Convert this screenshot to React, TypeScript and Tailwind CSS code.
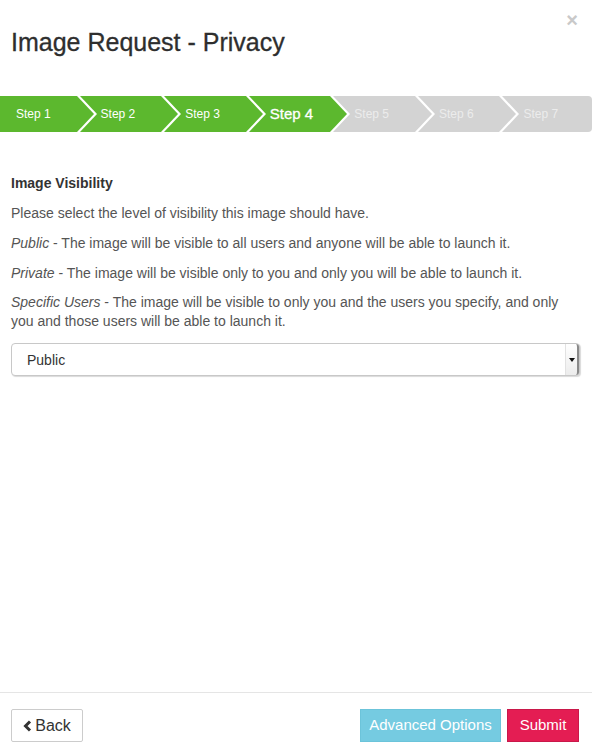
import React from "react";

const GREEN = "#5cb82e";
const GRAY = "#d3d3d3";

const steps = [1, 2, 3, 4, 5, 6, 7];
const active = 4;

function Chevron({ color, next }: { color: string; next: string }) {
  return (
    <svg
      className="absolute top-0 right-[-13px] z-10"
      width="21"
      height="36"
      viewBox="0 0 21 36"
    >
      <rect x="0" y="0" width="21" height="36" fill={next} />
      <polygon points="0,0 3,0 20,18 3,36 0,36" fill="#ffffff" />
      <polygon points="0,0 17,18 0,36" fill={color} />
    </svg>
  );
}

export default function App() {
  return (
    <div
      className="w-[592px] h-[749px] bg-white flex flex-col text-[#333]"
      style={{ fontFamily: '"Liberation Sans", Arial, sans-serif' }}
    >
      <div className="flex justify-between items-start pl-[11px] pr-[14px] pt-[28px]">
        <h4 className="text-[25px] leading-[28px] text-[#2e2e2e] [-webkit-text-stroke:0.3px_#2e2e2e]">
          Image Request - Privacy
        </h4>
        <span className="text-[#c9c9c9] text-[20px] font-bold leading-[20px] mt-[-18px]">×</span>
      </div>

      <div className="flex h-[36px] mt-[40px]">
        {steps.map((s) => {
          const done = s <= active;
          const color = done ? GREEN : GRAY;
          const nextColor = s + 1 <= active ? GREEN : GRAY;
          return (
            <div
              key={s}
              className={`relative flex-1 flex items-center pl-[16px] ${
                s === 7 ? "rounded-r-[4px]" : ""
              } ${done ? "bg-[#5cb82e]" : "bg-[#d3d3d3]"}`}
            >
              <span
                className={`relative z-20 ${
                  s === active
                    ? "text-[15px] text-white [-webkit-text-stroke:0.3px_#ffffff]"
                    : done
                    ? "text-[12px] text-white"
                    : "text-[12px] text-[#ececec]"
                }`}
              >
                Step {s}
              </span>
              {s < 7 && <Chevron color={color} next={nextColor} />}
            </div>
          );
        })}
      </div>

      <div className="flex-1 flex flex-col px-[11px] pt-[41px] text-[14px] leading-[20px]">
        <div className="font-bold text-[#333]">Image Visibility</div>
        <div className="flex flex-col gap-[10px] mt-[10px] text-[#555]">
          <p>Please select the level of visibility this image should have.</p>
          <p>
            <i>Public</i>&nbsp;- The image will be visible to all users and anyone will be able to launch it.
          </p>
          <p>
            <i>Private</i>&nbsp;- The image will be visible only to you and only you will be able to launch it.
          </p>
          <p className="leading-[19px]">
            <i>Specific Users</i>&nbsp;- The image will be visible to only you and the users you specify, and only
            you and those users will be able to launch it.
          </p>
        </div>
        <div className="mt-[12px] h-[33px] w-[569px] flex items-stretch border border-[#c8c8c8] rounded-[4px] bg-white shadow-[1px_1px_1px_rgba(0,0,0,0.15)]">
          <div className="flex-1 flex items-center pl-[15px] text-[14px] text-[#333]">Public</div>
          <div className="w-[14px] flex items-center justify-center border-l border-[#e2e2e2] bg-gradient-to-b from-[#ffffff] to-[#ececec] border-r-2 border-r-[#8a8a8a] rounded-r-[3px]">
            <svg width="6" height="4" viewBox="0 0 6 4">
              <polygon points="0,0 6,0 3,4" fill="#111" />
            </svg>
          </div>
        </div>
      </div>

      <div className="h-[57px] border-t border-[#e5e5e5] flex justify-between items-start pl-[11px] pr-[13px] pt-[16px]">
        <button className="h-[33px] w-[72px] flex items-center justify-center gap-[3px] border border-[#cccccc] rounded-[2px] bg-white text-[#333] text-[16px]">
          <svg width="9" height="12" viewBox="0 0 9 12">
            <polyline points="7,1.5 2.5,6 7,10.5" fill="none" stroke="#333" strokeWidth="3" />
          </svg>
          Back
        </button>
        <div className="flex gap-[6px]">
          <button className="h-[33px] w-[141px] bg-[#75cbe1] text-white text-[15px] border border-[#6cc4da]">
            Advanced Options
          </button>
          <button className="h-[33px] w-[72px] bg-[#e41d53] text-white text-[15px] border border-[#c9184a]">
            Submit
          </button>
        </div>
      </div>
    </div>
  );
}
